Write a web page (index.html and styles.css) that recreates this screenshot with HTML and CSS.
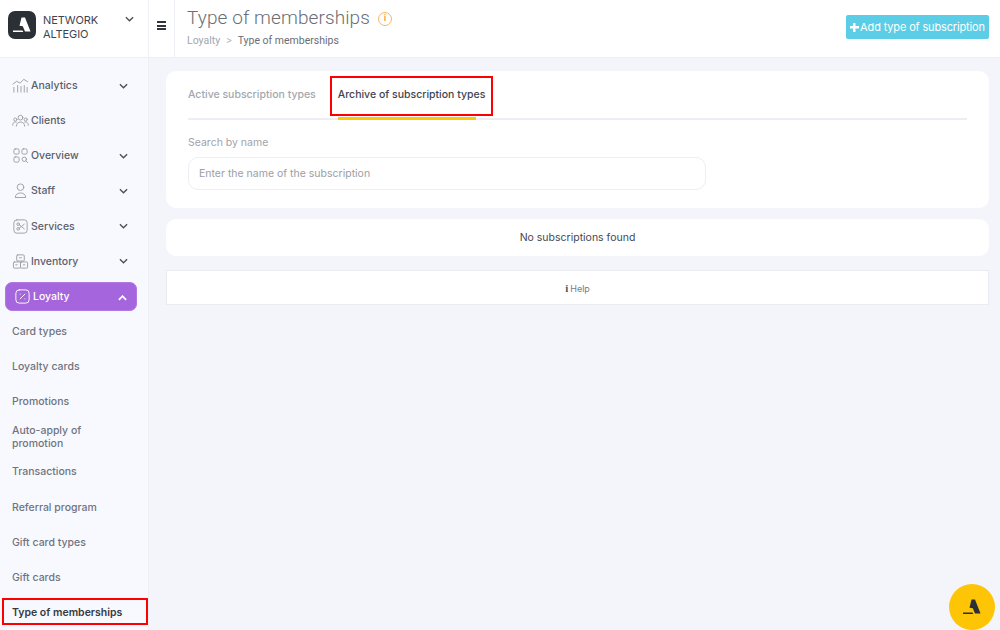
FILE: index.html
```html
<!DOCTYPE html>
<html lang="en">
<head>
<meta charset="utf-8">
<title>Type of memberships</title>
<link rel="stylesheet" href="styles.css">
</head>
<body>
<div class="app">
  <aside class="sidebar">
    <div class="brand">
      <span class="logo"><svg viewBox="0 0 28 28" width="28" height="28"><path class="logo-mark" d="M13.5 6.5h3.5l5.5 14h-5.5l-2.2-5.2-3.3-.6zM5 19.5h9.500l.8 1.500H5z"/></svg></span>
      <span class="brand-name">NETWORK<br>ALTEGIO</span>
      <svg class="chev brand-chev" viewBox="0 0 10 6" width="9" height="6"><path d="M1 1l4 4 4-4"/></svg>
    </div>
    <nav class="nav">
      <a class="item"><svg class="ico" viewBox="0 0 18 18"><path d="M1 7.500l4-3 3.500 2 4-4 4 2.500M2 11v5M6 9v7M9.500 10v6M13 9v7M16 11v5"/></svg><span>Analytics</span><svg class="chev" viewBox="0 0 10 6" width="9" height="6"><path d="M1 1l4 4 4-4"/></svg></a>
      <a class="item"><svg class="ico" viewBox="0 0 18 18"><circle cx="9" cy="6" r="2.500"/><circle cx="3.500" cy="8" r="1.700"/><circle cx="14.500" cy="8" r="1.700"/><path d="M4.500 15c0-6 9-6 9 0M.7 14c0-3.500 2.500-3.800 3.800-3.300M17.300 14c0-3.500-2.500-3.800-3.800-3.300"/></svg><span>Clients</span></a>
      <a class="item"><svg class="ico" viewBox="0 0 18 18"><rect x="2" y="2" width="5.500" height="5.500" rx="1.500"/><rect x="10.500" y="2" width="5.500" height="5.500" rx="1.500"/><rect x="2" y="10.500" width="5.500" height="5.500" rx="1.500"/><circle cx="13" cy="13" r="2.300"/><path d="M14.800 14.800l1.700 1.700"/></svg><span>Overview</span><svg class="chev" viewBox="0 0 10 6" width="9" height="6"><path d="M1 1l4 4 4-4"/></svg></a>
      <a class="item"><svg class="ico" viewBox="0 0 18 18"><circle cx="9" cy="5.500" r="3.500"/><path d="M3.500 16c0-6 11-6 11 0z"/></svg><span>Staff</span><svg class="chev" viewBox="0 0 10 6" width="9" height="6"><path d="M1 1l4 4 4-4"/></svg></a>
      <a class="item"><svg class="ico" viewBox="0 0 18 18"><rect x="2" y="2" width="14" height="14" rx="3"/><circle cx="6.500" cy="6.500" r="1.400"/><circle cx="6.500" cy="11.500" r="1.400"/><path d="M7.800 7.300l5.200 4.200M7.800 10.700L13 6.500"/></svg><span>Services</span><svg class="chev" viewBox="0 0 10 6" width="9" height="6"><path d="M1 1l4 4 4-4"/></svg></a>
      <a class="item"><svg class="ico" viewBox="0 0 18 18"><rect x="5" y="2" width="8" height="6.500" rx="1"/><rect x="1.500" y="9.500" width="7.500" height="6.500" rx="1"/><rect x="9" y="9.500" width="7.500" height="6.500" rx="1"/><path d="M8 5h2M4 12.500h1.500M12 12.500h1.500"/></svg><span>Inventory</span><svg class="chev" viewBox="0 0 10 6" width="9" height="6"><path d="M1 1l4 4 4-4"/></svg></a>
      <a class="item active"><svg class="ico" viewBox="0 0 18 18"><rect x="2" y="2" width="14" height="14" rx="3.500"/><path d="M11.500 6.500l-5 5M6.500 6.500h.1M11.500 11.500h.1"/></svg><span>Loyalty</span><svg class="chev up" viewBox="0 0 10 6" width="9" height="6"><path d="M1 5l4-4 4 4"/></svg></a>
      <a class="item sub">Card types</a>
      <a class="item sub">Loyalty cards</a>
      <a class="item sub">Promotions</a>
      <a class="item sub">Auto-apply of promotion</a>
      <a class="item sub">Transactions</a>
      <a class="item sub">Referral program</a>
      <a class="item sub">Gift card types</a>
      <a class="item sub">Gift cards</a>
      <a class="item sub current">Type of memberships</a>
    </nav>
  </aside>
  <div class="main">
    <header class="topbar">
      <button class="burger" aria-label="Menu"><span></span><span></span><span></span></button>
      <div class="heading">
        <h1>Type of memberships <span class="info">i</span></h1>
        <div class="crumbs"><span>Loyalty</span><span class="sep">&gt;</span><span class="crumb-now">Type of memberships</span></div>
      </div>
      <button class="add"><span class="plus"></span>Add type of subscription</button>
    </header>
    <div class="content">
      <section class="card filters">
        <div class="tabs">
          <a class="tab">Active subscription types</a>
          <a class="tab selected">Archive of subscription types</a>
        </div>
        <label class="field-label" for="search">Search by name</label>
        <input id="search" class="search" placeholder="Enter the name of the subscription">
      </section>
      <section class="card empty">No subscriptions found</section>
      <section class="help"><span class="help-i">i</span>Help</section>
    </div>
  </div>
</div>
<button class="fab" aria-label="Altegio"><svg viewBox="0 0 28 28" width="28" height="28"><path class="fab-mark" d="M13.500 6.500h3.500l5.500 14h-5.500l-2.200-5.200-3.300-.6zM5 19.500h9.500l.8 1.500H5z"/></svg></button>
</body>
</html>
```

FILE: styles.css
```css
* { box-sizing: border-box; }
html, body { margin: 0; height: 630px; overflow: hidden; }
body { font-family: Inter, "Liberation Sans", sans-serif; background: #f3f5fa; color: #3f4450; }
.app { display: flex; height: 630px; }

.sidebar { width: 149px; flex: none; background: #f8f9fe; border-right: 1px solid #eef0f6; }
.brand { height: 58px; background: #fff; border-bottom: 1px solid #eef0f6; display: flex; align-items: flex-start; padding: 11px 14px 0 8px; }
.logo { width: 28px; height: 28px; border-radius: 7px; background: #2b3036; flex: none; }
.logo svg { display: block; }
.logo-mark { fill: #fff; }
.brand-name { font-size: 11px; line-height: 14px; margin: 2px 0 0 7px; color: #3f4450; flex: 1; letter-spacing: -.1px; }
.chev { fill: none; stroke: #4a4f5a; stroke-width: 1.500; flex: none; }
.brand-chev { margin-top: 5px; }

.nav { display: flex; flex-direction: column; padding: 10px 0 0; }
.item { height: 35.130px; display: flex; align-items: center; padding: 0 20px 0 12px; font-size: 10.500px; font-weight: 500; color: #5b606b; }
.item > span { flex: 1; margin-left: 2px; }
.ico { width: 17px; height: 17px; flex: none; fill: none; stroke: #9a9ea6; stroke-width: 1; stroke-linecap: round; stroke-linejoin: round; }
.active { height: 29px; margin: 3px 11px 3.130px 5px; padding: 0 9px 0 8px; background: #a565dc; border-radius: 7px; color: #fff; border: 1px solid #b078e2; }
.active .ico { stroke: #fff; }
.active .chev { stroke: #fff; stroke-width: 2; margin-top: 4px; }
.sub { color: #6f747e; }
.current { color: #343944; font-weight: 600; position: relative; }
.current::after { content: ""; position: absolute; left: 2px; right: 0; top: 3px; bottom: 5px; border: 2px solid #f00; }

.main { flex: 1; min-width: 0; display: flex; flex-direction: column; }
.topbar { height: 58px; flex: none; background: #fff; border-bottom: 1px solid #eef0f6; display: flex; padding-right: 11px; }
.burger { width: 26px; height: 57px; flex: none; border: 0; border-right: 1px solid #eef0f6; background: none; padding: 0 0 6px; display: flex; flex-direction: column; align-items: center; justify-content: center; gap: 1.500px; margin-left: 0; }
.burger span { width: 9px; height: 2px; background: #30343b; }
.heading { flex: 1; padding: 6px 0 0 12px; }
h1 { margin: 0; font: 300 19px/23px Roboto, sans-serif; color: #6a6e76; letter-spacing: .1px; display: flex; align-items: center; gap: 8px; }
.info { width: 14px; height: 14px; border: 1.500px solid #f3b868; border-radius: 50%; font: 700 9px/11px Roboto, sans-serif; color: #eea448; text-align: center; margin-top: 2px; }
.crumbs { font: 400 10.500px/14px Roboto, sans-serif; color: #a2a6ae; margin-top: 5px; display: flex; gap: 6px; }
.crumb-now { color: #6a6e76; }
.sep { color: #b5b8bf; }
.add { align-self: flex-start; margin-top: 15px; width: 143px; height: 24px; border: 0; border-radius: 2px; background: #5bcde6; color: #fff; font: 400 11px/24px Inter, sans-serif; padding: 0; display: flex; align-items: center; justify-content: center; gap: 1px; letter-spacing: -.15px; }
.plus { width: 9px; height: 9px; flex: none; background: linear-gradient(#fff, #fff) center/100% 2.500px no-repeat, linear-gradient(#fff, #fff) center/2.500px 100% no-repeat; }

.content { padding: 13px 11px 0 17px; display: flex; flex-direction: column; }
.card { background: #fff; border-radius: 10px; }
.filters { height: 137px; padding: 0 22px; display: flex; flex-direction: column; align-items: flex-start; }
.tabs { align-self: stretch; height: 49px; border-bottom: 2px solid #eceef3; display: flex; margin-right: 0; }
.tab { font-size: 10.500px; font-weight: 500; color: #a3a7ae; line-height: 48px; height: 49px; }
.tab.selected { margin-left: 22px; width: 138px; color: #3f4450; border-bottom: 3px solid #fcc60a; border-radius: 3px 3px 0 0; white-space: nowrap; position: relative; }
.tab.selected::after { content: ""; position: absolute; left: -8px; top: 5px; width: 159px; height: 36px; border: 2px solid #f00; }
.field-label { font-size: 10.500px; line-height: 14px; color: #9fa3ab; margin-top: 16px; }
.search { width: 518px; height: 33px; margin-top: 7px; border: 1px solid #eceef5; border-radius: 10px; padding: 0 10px; font: 400 10.500px Inter, sans-serif; outline: 0; background: #fff; }
.search::placeholder { color: #9a9ea6; opacity: 1; }
.empty { height: 37px; margin-top: 11px; text-align: center; font-size: 10.500px; line-height: 37px; color: #444955; }
.help { height: 35px; margin-top: 14px; background: #fff; border: 1px solid #e9ebf0; text-align: center; font-size: 9px; line-height: 34px; color: #777b84; }
.help-i { font: 700 11px/34px "Liberation Serif", serif; color: #555; margin-right: 2px; }

.fab { position: fixed; left: 949px; top: 584px; width: 46px; height: 46px; border: 0; border-radius: 50%; background: #fdc506; padding: 0; display: flex; align-items: center; justify-content: center; }
.fab-mark { fill: #2b3036; }
```
